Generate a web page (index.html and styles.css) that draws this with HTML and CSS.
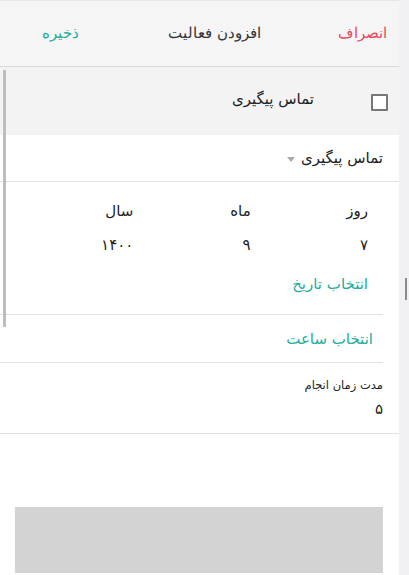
FILE: index.html
```html
<!DOCTYPE html>
<html lang="fa">
<head>
<meta charset="utf-8">
<link rel="stylesheet" href="styles.css">
</head>
<body>
<div class="page">
  <div class="main" dir="rtl">
    <header class="header">
      <span class="cancel">انصراف</span>
      <span class="title">افزودن فعالیت</span>
      <span class="save">ذخیره</span>
    </header>
    <div class="check-row">
      <span class="checkbox"></span>
      <span class="check-label">تماس پیگیری</span>
    </div>
    <div class="select-row">
      <span class="select-text">تماس پیگیری</span>
      <span class="caret"></span>
    </div>
    <div class="date-block">
      <div class="date-grid">
        <span>روز</span><span>ماه</span><span>سال</span>
        <span>۷</span><span>۹</span><span>۱۴۰۰</span>
      </div>
      <div class="link date-link">انتخاب تاریخ</div>
    </div>
    <div class="time-row">
      <span class="link">انتخاب ساعت</span>
    </div>
    <div class="duration">
      <div class="dur-label">مدت زمان انجام</div>
      <div class="dur-value">۵</div>
    </div>
    <div class="spacer"></div>
    <div class="gray-box"></div>
    <div class="left-bar"></div>
  </div>
  <div class="side">
    <span class="thumb"></span>
  </div>
</div>
</body>
</html>
```
FILE: styles.css
```css
* { box-sizing: border-box; }
html, body { margin: 0; padding: 0; }
body {
  font-family: "DejaVu Sans", "Noto Sans", sans-serif;
  color: #222;
  background: #f1f1f3;
  width: 409px;
  height: 575px;
  overflow: hidden;
}
.page {
  display: flex;
  direction: ltr;
  height: 575px;
}
.main {
  position: relative;
  width: 399px;
  background: #fff;
  display: flex;
  flex-direction: column;
  direction: rtl;
}
.side {
  position: relative;
  width: 10px;
  background: #f1f1f3;
}
.thumb {
  position: absolute;
  left: 6px;
  top: 278px;
  width: 2px;
  height: 22px;
  background: #8a8a8a;
}
.header {
  height: 67px;
  background: #f5f5f5;
  border-top: 1px solid #e6e6e6;
  border-bottom: 1px solid #d9d9d9;
  box-shadow: 0 1px 2px rgba(0,0,0,0.08);
  display: grid;
  grid-template-columns: 1fr auto 1fr;
  align-items: center;
  padding: 0 12px 0 42px;
  font-size: 14.5px;
  font-weight: 300;
}
.header span { margin-top: -2px; }
.cancel { color: #ea4a5f; justify-self: start; }
.title { color: #333; }
.save { color: #22ae9e; justify-self: end; }
.check-row {
  height: 68px;
  background: #f3f3f3;
  display: flex;
  align-items: center;
  padding-right: 11px;
  gap: 57px;
  font-size: 15px;
}
.checkbox {
  width: 17px;
  height: 17px;
  border: 2px solid #777;
  background: #fff;
  border-radius: 1px;
  margin-top: 3px;
}
.check-label { margin-top: -4px; }
.select-row {
  height: 47px;
  display: flex;
  align-items: center;
  gap: 6px;
  padding-right: 16px;
  border-bottom: 1px solid #e0e0e0;
  font-size: 15px;
}
.caret {
  width: 0;
  height: 0;
  border-left: 4px solid transparent;
  border-right: 4px solid transparent;
  border-top: 5px solid #aaa;
  margin-top: 2px;
}
.date-block {
  margin-right: 16px;
  border-bottom: 1px solid #e0e0e0;
  padding: 20px 15px 21px 16px;
}
.date-grid {
  display: grid;
  grid-template-columns: repeat(3, 1fr);
  row-gap: 16px;
  font-size: 15px;
  line-height: 18px;
}
.link {
  color: #22ae9e;
  font-size: 15px;
}
.date-link { margin-top: 21px; line-height: 18px; }
.time-row {
  height: 48px;
  margin-right: 16px;
  padding-right: 10px;
  border-bottom: 1px solid #e0e0e0;
  display: flex;
  align-items: center;
}
.duration {
  height: 71px;
  padding: 15px 16px 0 0;
  border-bottom: 1px solid #e0e0e0;
}
.dur-label { font-size: 11.5px; line-height: 14px; color: #222; }
.dur-value { font-size: 15px; margin-top: 8px; line-height: 18px; }
.spacer { height: 73px; }
.gray-box {
  margin: 0 16px 0 15px;
  height: 66px;
  background: #d3d3d3;
}
.left-bar {
  position: absolute;
  left: 3px;
  top: 70px;
  width: 3px;
  height: 257px;
  background: #bdbdbd;
}
```
